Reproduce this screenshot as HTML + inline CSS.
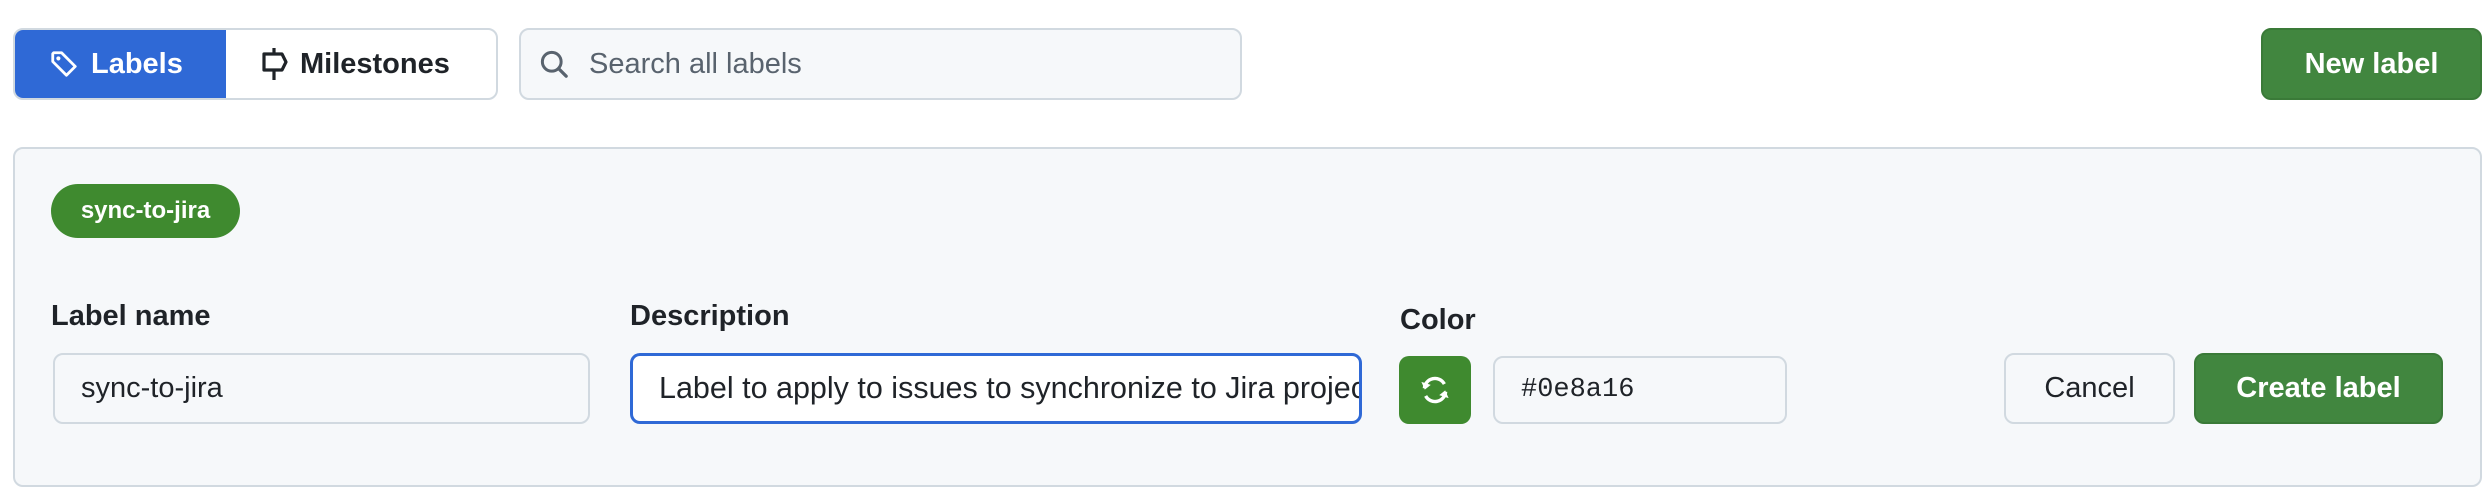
<!DOCTYPE html>
<html><head><style>
*{box-sizing:border-box;margin:0;padding:0}
body{width:2488px;height:442px;background:#fff;font-family:"Liberation Sans",sans-serif;color:#1f2328;position:relative;overflow:hidden}
.a{position:absolute}
.seg{left:13px;top:28px;width:485px;height:72px;border:2px solid #d1d9e0;border-radius:10px;overflow:hidden;background:#fff}
.lab{left:0;top:0;width:211px;height:100%;background:#2f69d6;color:#fff;font-weight:bold;font-size:29px;display:flex;align-items:center}
.mil{left:211px;top:0;right:0;height:100%;font-weight:bold;font-size:29px;display:flex;align-items:center}
.inp{border:2px solid #d1d9e0;border-radius:10px;background:#f6f8fa;font-size:29px;display:flex;align-items:center}
.btn{border-radius:10px;font-weight:bold;font-size:29px;display:flex;align-items:center;justify-content:center}
.g{background:#41863f;color:#fff;border:2px solid #3a7a38}
.lbl{font-weight:bold;font-size:29px}
</style></head><body>
<div class="a seg">
 <div class="a lab"><svg style="margin-left:34px;margin-right:12px" width="30" height="32" viewBox="0 0 16 16"><path d="M2 2.5v4.2l7.3 7.3 4.7-4.7L6.7 2H2.5z" fill="none" stroke="#fff" stroke-width="1.5" stroke-linejoin="round"/><circle cx="5" cy="5" r="1.1" fill="#fff"/></svg>Labels</div>
 <div class="a mil"><svg style="margin-left:34px;margin-right:12px" width="28" height="36" viewBox="0 0 14 18"><path d="M7 1v3M7 12v5M2 4h9l2 4-2 4H2z" fill="none" stroke="#1f2328" stroke-width="1.6" stroke-linejoin="round"/></svg>Milestones</div>
</div>
<div class="a inp" style="left:519px;top:28px;width:723px;height:72px;color:#59636e"><svg style="margin-left:18px;margin-right:20px" width="30" height="32" viewBox="0 0 16 16"><circle cx="6.8" cy="6.8" r="5" fill="none" stroke="#59636e" stroke-width="1.6"/><path d="M10.5 10.5l4 4" stroke="#59636e" stroke-width="1.7" stroke-linecap="round"/></svg>Search all labels</div>
<div class="a btn g" style="left:2261px;top:28px;width:221px;height:72px">New label</div>
<div class="a" style="left:13px;top:147px;width:2469px;height:340px;background:#f6f8fa;border:2px solid #d1d9e0;border-radius:10px"></div>
<div class="a" style="left:51px;top:184px;width:189px;height:54px;border-radius:27px;background:#3f8a2f;color:#fff;font-weight:bold;font-size:24px;display:flex;align-items:center;justify-content:center">sync-to-jira</div>
<div class="a lbl" style="left:51px;top:300px">Label name</div>
<div class="a lbl" style="left:630px;top:300px">Description</div>
<div class="a lbl" style="left:1400px;top:304px">Color</div>
<div class="a inp" style="left:53px;top:353px;width:537px;height:71px;padding-left:26px">sync-to-jira</div>
<div class="a inp" style="left:630px;top:353px;width:732px;height:71px;padding-left:26px;background:#fff;border:3px solid #2f69d6;white-space:nowrap;overflow:hidden;font-size:30.5px">Label to apply to issues to synchronize to Jira project</div>
<div class="a" style="left:1399px;top:356px;width:72px;height:68px;border-radius:10px;background:#3f8a2f;display:flex;align-items:center;justify-content:center"><svg width="34" height="34" viewBox="0 0 16 16"><path d="M3 7.2A5 5 0 0 1 12.4 5.2M13 8.8A5 5 0 0 1 3.6 10.8" fill="none" stroke="#fff" stroke-width="1.6"/><path d="M1.6 4.2L3.2 7.8 6 5.6z M14.4 11.8L12.8 8.2 10 10.4z" fill="#fff"/></svg></div>
<div class="a inp" style="left:1493px;top:356px;width:294px;height:68px;padding-left:26px;font-family:'Liberation Mono',monospace;font-size:27px">#0e8a16</div>
<div class="a btn" style="left:2004px;top:353px;width:171px;height:71px;background:#f6f8fa;border:2px solid #d1d9e0;font-weight:normal;color:#1f2328">Cancel</div>
<div class="a btn g" style="left:2194px;top:353px;width:249px;height:71px">Create label</div>
</body></html>
